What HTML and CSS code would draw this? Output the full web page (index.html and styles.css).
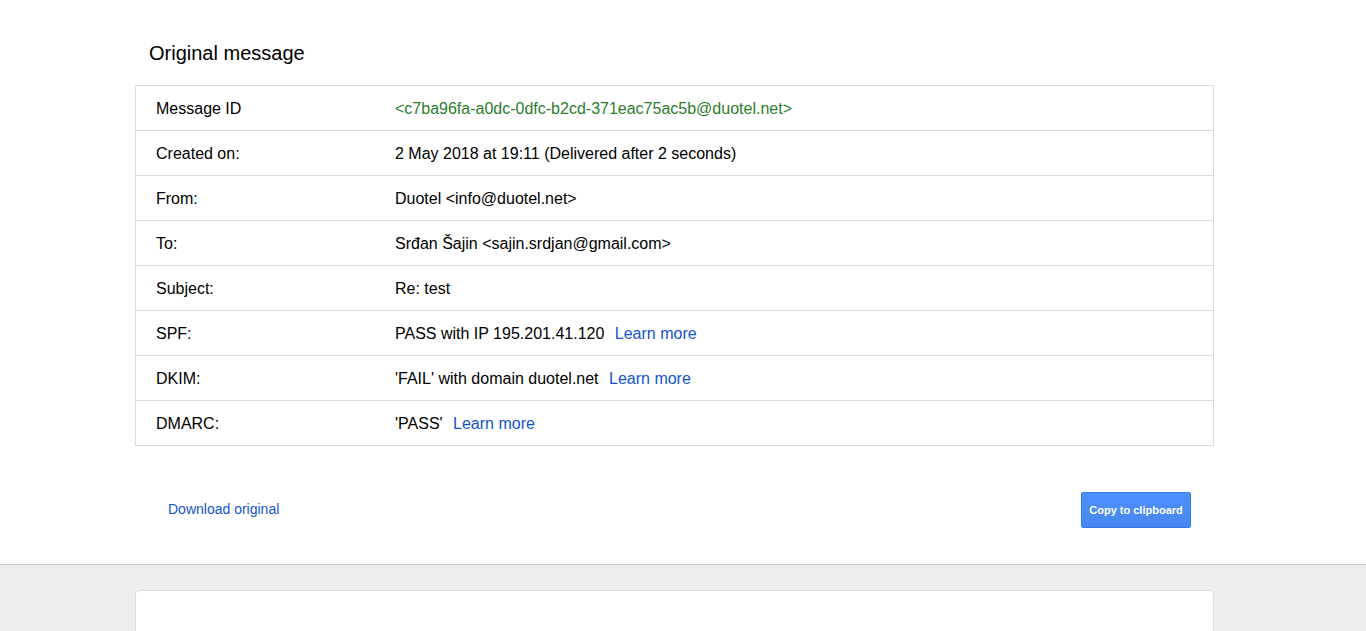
FILE: index.html
```html
<!DOCTYPE html>
<html>
<head>
<meta charset="utf-8">
<link rel="stylesheet" href="styles.css">
</head>
<body>
<div class="top">
  <div class="wrap">
    <h1 class="title">Original message</h1>
    <div class="table">
      <div class="row"><div class="label">Message ID</div><div class="value green">&lt;c7ba96fa-a0dc-0dfc-b2cd-371eac75ac5b@duotel.net&gt;</div></div>
      <div class="row"><div class="label">Created on:</div><div class="value">2 May 2018 at 19:11 (Delivered after 2 seconds)</div></div>
      <div class="row"><div class="label">From:</div><div class="value">Duotel &lt;info@duotel.net&gt;</div></div>
      <div class="row"><div class="label">To:</div><div class="value">Srđan Šajin &lt;sajin.srdjan@gmail.com&gt;</div></div>
      <div class="row"><div class="label">Subject:</div><div class="value">Re: test</div></div>
      <div class="row"><div class="label">SPF:</div><div class="value">PASS with IP 195.201.41.120 <a class="link" href="#">Learn more</a></div></div>
      <div class="row"><div class="label">DKIM:</div><div class="value">'FAIL' with domain duotel.net <a class="link" href="#">Learn more</a></div></div>
      <div class="row"><div class="label">DMARC:</div><div class="value">'PASS' <a class="link" href="#">Learn more</a></div></div>
    </div>
    <div class="actions">
      <a class="download" href="#">Download original</a>
      <button class="btn">Copy to clipboard</button>
    </div>
  </div>
</div>
<div class="bottom">
  <div class="wrap">
    <div class="card"></div>
  </div>
</div>
</body>
</html>
```
FILE: styles.css
```css
html, body {
  margin: 0;
  padding: 0;
}
body {
  font-family: "Liberation Sans", Arial, sans-serif;
  color: #000;
  background: #fff;
}
.top, .bottom {
  padding-right: 17px;
}
.wrap {
  width: 1079px;
  margin: 0 auto;
}
.top {
  background: #fff;
  border-bottom: 1px solid #c4c4c4;
  padding-top: 41px;
  padding-bottom: 36px;
}
.title {
  font-size: 20px;
  font-weight: normal;
  margin: 0 0 20px 14px;
  line-height: 24px;
}
.table {
  border: 1px solid #ddd;
}
.row {
  display: flex;
  align-items: center;
  height: 43px;
  padding-top: 1px;
  border-top: 1px solid #ddd;
  font-size: 16px;
}
.row:first-child {
  border-top: none;
}
.label {
  width: 239px;
  padding-left: 20px;
  flex: none;
}
.value {
  white-space: pre;
}
.green {
  color: #2a7d2c;
}
.link {
  color: #1155cc;
  text-decoration: none;
  margin-left: 6px;
}
.actions {
  display: flex;
  justify-content: space-between;
  align-items: center;
  padding: 46px 23px 0 33px;
}
.download {
  color: #1155cc;
  text-decoration: none;
  font-size: 14px;
  padding-bottom: 3px;
}
.btn {
  width: 110px;
  height: 36px;
  background: linear-gradient(#4d90fe, #4787ed);
  border: 1px solid #3079ed;
  border-radius: 2px;
  color: #fff;
  font-family: "Liberation Sans", Arial, sans-serif;
  font-weight: bold;
  font-size: 11px;
  padding: 0;
}
.bottom {
  background: #eeeeee;
  padding-top: 25px;
  height: 400px;
}
.card {
  background: #fff;
  border: 1px solid #ddd;
  border-radius: 4px;
  height: 300px;
}
```
